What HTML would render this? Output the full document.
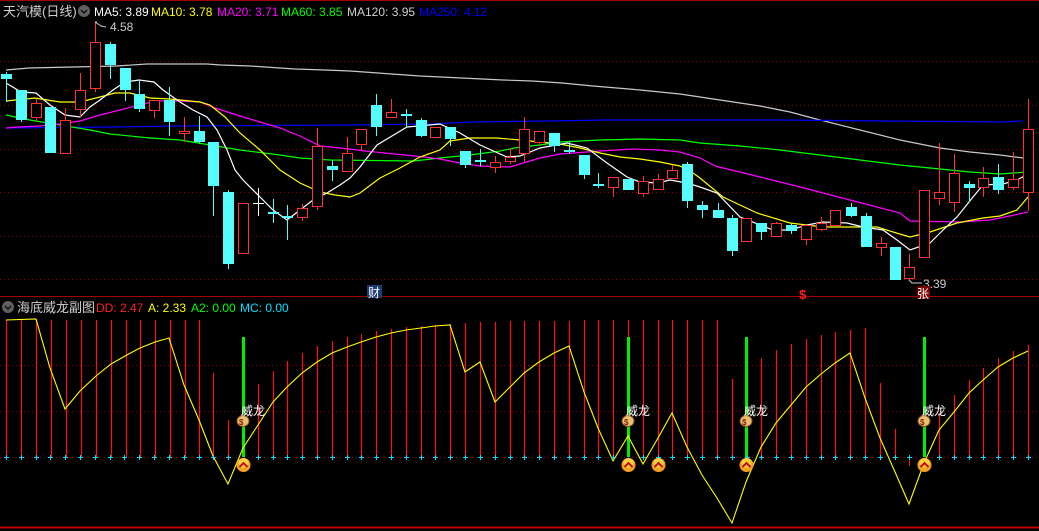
<!DOCTYPE html>
<html><head><meta charset="utf-8"><style>
html,body{margin:0;padding:0;background:#000;width:1039px;height:531px;overflow:hidden}
svg{display:block}
text{font-family:"Liberation Sans","Noto Sans CJK SC",sans-serif}
</style></head><body>
<svg id="s" width="1039" height="531" viewBox="0 0 1039 531" xmlns="http://www.w3.org/2000/svg">
<rect width="1039" height="531" fill="#000"/>
<line x1="0" y1="0.5" x2="1039" y2="0.5" stroke="#a00000"/>
<g id="grid" stroke="#8b0000" stroke-dasharray="1,3">
<line x1="0" y1="61.5" x2="1039" y2="61.5"/><line x1="0" y1="105.5" x2="1039" y2="105.5"/>
<line x1="0" y1="149.5" x2="1039" y2="149.5"/><line x1="0" y1="192.5" x2="1039" y2="192.5"/>
<line x1="0" y1="236.5" x2="1039" y2="236.5"/><line x1="0" y1="279.5" x2="1039" y2="279.5"/>
<line x1="0" y1="365.5" x2="1039" y2="365.5"/><line x1="0" y1="411.5" x2="1039" y2="411.5"/>
<line x1="0" y1="457.5" x2="1039" y2="457.5"/>
</g>
<line x1="0" y1="296.5" x2="1039" y2="296.5" stroke="#a00000"/>
<line x1="0" y1="527.5" x2="1039" y2="527.5" stroke="#c00000" stroke-width="2"/>

<g id="ma" fill="none" stroke-width="1.2"></g>
<g id="candles"></g>
<g id="lower"></g>

<!-- legends -->
<text x="3" y="16" font-size="13" fill="#d0d0d0">天汽模(日线)</text>
<circle cx="84" cy="11" r="6" fill="#606060"/><path d="M81 10 l3 3 l3 -3" stroke="#111" stroke-width="1.5" fill="none"/>
<text x="94" y="16" font-size="12" fill="#fff">MA5: 3.89</text>
<text x="151" y="16" font-size="12" fill="#ffff00">MA10: 3.78</text>
<text x="217" y="16" font-size="12" fill="#ff00ff">MA20: 3.71</text>
<text x="281" y="16" font-size="12" fill="#00ff00">MA60: 3.85</text>
<text x="347" y="16" font-size="12" fill="#d0d0d0">MA120: 3.95</text>
<text x="419" y="16" font-size="12" fill="#0000ff">MA250: 4.12</text>

<circle cx="8" cy="307" r="6" fill="#606060"/><path d="M5 306 l3 3 l3 -3" stroke="#111" stroke-width="1.5" fill="none"/>
<text x="17" y="312" font-size="13" fill="#d0d0d0">海底威龙副图</text>
<text x="96" y="312" font-size="12" fill="#ff2020">DD: 2.47</text>
<text x="148" y="312" font-size="12" fill="#ffff00">A: 2.33</text>
<text x="191" y="312" font-size="12" fill="#00ff00">A2: 0.00</text>
<text x="240" y="312" font-size="12" fill="#00e0ff">MC: 0.00</text>

<!-- price markers -->
<path d="M95 22 L97 22 M95 22 l3 2 l3 2 l5 1" stroke="#ccc" fill="none"/>
<text x="110" y="31" font-size="12" fill="#ccc">4.58</text>
<path d="M909 280 l3 3 l10 0" stroke="#ccc" fill="none"/>
<text x="923" y="288" font-size="12" fill="#ccc">3.39</text>
<rect x="367" y="285" width="15" height="13" fill="#1c3c70"/>
<text x="368" y="297" font-size="12" fill="#fff">财</text>
<text x="799" y="299" font-size="13" fill="#ff2020" font-weight="bold">$</text>
<rect x="917" y="286" width="13" height="13" fill="#7a0000"/>
<text x="917" y="298" font-size="12" fill="#fff">张</text>
</svg>
<script>
var NS="http://www.w3.org/2000/svg";
function el(p,t,a){var e=document.createElementNS(NS,t);for(var k in a)e.setAttribute(k,a[k]);p.appendChild(e);return e;}
var ma=document.getElementById('ma');
function line(pts,c){el(ma,'polyline',{points:pts,stroke:c});}
line("6,70 29,68 73,67 117,66 147,64 207,64 221,65 250,66 280,68 295,69 325,70 350,71 420,76 503,80 532,81 562,83 593,86 617,88 640,90 660,92 680,94 700,97 720,100 760,106 790,112 820,120 860,130 900,140 940,148 970,152 1000,155 1023,158","#c8c8c8");
line("6,128 117,127 177,126 350,125 430,124 473,122 547,121 605,120 780,120 888,121 1000,122 1023,121","#0000ff");
line("6,115 30,120 60,125 90,130 110,134 150,138 180,140 210,145 240,150 280,155 300,158 330,160 414,161 440,158 470,155 500,151 520,147 540,145 560,142 600,140 640,139 680,140 700,143 740,146 780,150 820,155 860,160 900,165 940,169 970,172 1000,174 1028,172","#00ff00");
line("6,128 18,127 40,126 60,124 80,121 100,115 120,110 140,105 155,101 180,101 200,102 215,108 240,116 260,122 280,128 300,136 320,146 350,149 365,151 395,154 415,156 440,159 460,163 480,166 510,167 520,164 540,158 560,154 600,151 634,149 660,150 680,152 700,158 715,166 760,177 800,187 850,200 900,213 910,221 960,222 990,220 1010,216 1028,212","#ff00ff");
line("6,101 35,98 60,102 80,102 100,97 115,93 130,93 150,98 170,99 200,102 210,105 225,117 240,133 260,150 280,170 300,183 320,192 335,195 350,197 360,193 380,178 400,168 420,157 440,150 450,141 470,138 497,138 520,140 560,144 580,148 600,153 620,157 640,159 660,162 680,166 693,173 700,178 723,197 757,213 790,223 823,227 877,227 903,235 910,237 930,232 957,223 983,218 1000,216 1017,210 1028,197","#ffff00");
line("6,83 21,92 36,93 50,105 65,115 80,117 90,107 100,100 113,90 125,82 139,80 154,82 163,90 180,102 193,110 207,117 217,130 227,150 235,170 243,180 260,197 273,210 287,220 300,210 313,200 327,193 340,185 350,178 360,167 377,145 407,127 440,124 460,133 480,145 507,157 520,156 540,148 567,143 587,148 607,163 627,177 640,182 657,183 670,180 687,183 700,187 717,193 740,217 773,230 790,230 807,225 823,222 847,223 863,227 883,230 897,240 910,250 930,243 943,230 957,217 973,197 983,185 1003,184 1017,180 1028,174","#ffffff");

var C=[[6,'c',74,79,72,102],[21,'c',90,120,90,122],[36,'r',103,117,99,122],[50,'c',107,153,107,153],[65,'r',120,153,108,153],[80,'r',90,109,73,117],[95,'r',42,88,22,92],[110,'c',44,65,42,79],[125,'c',68,90,68,101],[139,'c',94,109,81,112],[154,'r',100,110,100,118],[169,'c',100,122,87,136],[184,'r',131,133,117,142],[199,'c',131,142,116,143],[213,'c',142,186,142,216],[228,'c',192,264,190,269],[243,'r',203,253,203,253],[258,'w',203,204,188,216],[273,'c',212,214,199,223],[287,'c',216,218,205,240],[302,'r',208,217,204,221],[317,'r',146,206,128,210],[332,'c',166,170,160,181],[347,'r',153,171,137,171],[361,'r',129,144,129,150],[376,'c',105,127,94,136],[391,'r',112,117,99,117],[406,'c',114,116,109,128],[421,'c',120,136,118,137],[435,'r',127,137,127,137],[450,'c',127,139,127,146],[465,'c',151,165,151,168],[480,'c',160,162,149,166],[495,'r',162,167,156,173],[510,'r',157,161,148,164],[524,'r',129,153,117,162],[539,'r',131,142,131,146],[554,'c',133,146,133,152],[569,'c',150,152,141,154],[584,'c',155,175,155,179],[598,'c',184,186,173,188],[613,'r',177,187,177,197],[628,'c',179,190,179,190],[643,'r',181,193,176,197],[658,'r',179,189,174,190],[672,'r',170,178,165,179],[687,'c',164,201,162,208],[702,'c',205,210,201,218],[718,'c',210,218,203,218],[732,'c',218,251,215,256],[746,'r',218,241,218,241],[761,'c',223,232,223,240],[776,'r',223,236,222,236],[791,'c',225,231,223,234],[806,'r',225,239,225,245],[821,'r',223,229,217,231],[835,'r',210,225,210,225],[851,'c',207,216,203,217],[866,'c',216,247,213,247],[881,'r',243,247,237,256],[895,'c',247,280,247,280],[909,'r',267,278,254,280],[924,'r',190,257,190,257],[939,'r',192,198,143,205],[954,'r',173,202,154,212],[969,'c',184,188,181,202],[983,'r',178,187,167,197],[998,'c',177,190,164,194],[1013,'r',179,187,152,190],[1028,'r',129,192,99,211]];
var cg=document.getElementById('candles');
C.forEach(function(c){var x=c[0],t=c[1],col=t=='c'?'#54fcfc':(t=='r'?'#ff3232':'#fff');
 el(cg,'line',{x1:x+.5,x2:x+.5,y1:c[4],y2:c[5],stroke:col});
 var h=Math.max(c[3]-c[2],1);
 if(t=='r') el(cg,'rect',{x:x-4.5,y:c[2]+.5,width:10,height:h,fill:'#000',stroke:col});
 else el(cg,'rect',{x:x-5,y:c[2],width:11,height:t=='w'?1:Math.max(h,2),fill:col});
});
var B=[[6,320],[21,320],[36,320],[51,320],[66,320],[81,320],[96,320],[111,320],[126,320],[140,320],[155,320],[170,320],[185,320],[199,320],[213,373],[228,420],[258,384],[273,371],[287,361],[302,353],[317,346],[332,341],[347,337],[361,334],[376,331],[391,329],[406,327],[421,326],[435,325],[450,324],[465,323],[480,322],[495,322],[510,321],[524,321],[539,321],[554,321],[569,321],[584,320],[598,320],[613,320],[628,320],[643,320],[658,320],[672,320],[687,320],[702,320],[717,320],[732,379],[761,358],[776,350],[791,344],[806,339],[821,335],[835,332],[850,330],[865,328],[880,383],[895,429],[939,413],[954,395],[969,380],[983,368],[998,358],[1013,351],[1028,345]];
var lg=document.getElementById('lower');
B.forEach(function(b){el(lg,'line',{x1:b[0]+.5,x2:b[0]+.5,y1:b[1],y2:457,stroke:'#ff1010',"stroke-width":1.2});});
el(lg,'line',{x1:909.5,x2:909.5,y1:457,y2:466,stroke:'#ff1010'});
[243,628,746,924].forEach(function(x){el(lg,'rect',{x:x-1,y:337,width:3,height:120,fill:'#00ee00'});});
el(lg,'polyline',{fill:'none',stroke:'#ffff00','stroke-width':1.1,points:"6,320 36,319 50,368 65,409 80,391 96,376 111,364 125,356 140,348 155,342 169,338 184,385 199,420 213,456 228,484 243,448 258,425 273,402 287,387 302,373 317,362 332,353 347,347 361,342 376,337 391,333 406,330 421,328 435,326 450,325 465,372 480,362 495,402 510,387 524,373 539,362 554,353 569,346 584,392 598,428 613,461 628,436 643,464 658,438 672,413 687,447 702,475 717,498 732,523 746,482 761,447 776,423 791,405 806,387 821,374 835,363 850,353 865,398 880,438 895,472 909,504 924,463 939,430 954,412 969,393 983,380 998,367 1013,358 1028,351"});
for(var i=0;i<70;i++){var x=Math.round(6+i*14.81);if([243,628,746,924].indexOf(x)>=0)continue;
 el(lg,'path',{d:'M'+(x-2)+' 457.5h5M'+(x+.5)+' 455v5',stroke:'#00e0ff','stroke-width':1});}
[243,628,658,746,924].forEach(function(x){
 el(lg,'circle',{cx:x+.5,cy:465,r:7,fill:'#f5a020'});
 el(lg,'circle',{cx:x+.5,cy:463,r:5,fill:'#ffd040'});
 el(lg,'path',{d:'M'+(x-3.5)+' 467 l4 -4 l4 4',stroke:'#c01010','stroke-width':2,fill:'none'});
});
[243,628,746,924].forEach(function(x){
 el(lg,'ellipse',{cx:x,cy:421,rx:6,ry:5.5,fill:'#e8c070',stroke:'#8a5020'});
 el(lg,'rect',{x:x-2,y:414,width:4,height:2,fill:'#8a5020'});
 var t=el(lg,'text',{x:x-4,y:425,'font-size':8,fill:'#8a2010','font-weight':'bold'});t.textContent='$';
 var w=el(lg,'text',{x:x-2,y:415,'font-size':12,fill:'#fff'});w.textContent='威龙';
});
</script>
</body></html>
